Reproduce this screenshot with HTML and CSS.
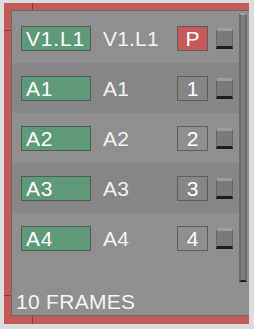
FILE: index.html
```html
<!DOCTYPE html>
<html>
<head>
<meta charset="utf-8">
<link rel="stylesheet" href="styles.css">
</head>
<body>
<div class="frame">
  <div class="panel">
    <div class="main">
      <div class="row">
        <div class="field">V1.L1</div>
        <div class="label">V1.L1</div>
        <div class="num num-p">P</div>
        <div class="btn"></div>
      </div>
      <div class="row">
        <div class="field">A1</div>
        <div class="label">A1</div>
        <div class="num">1</div>
        <div class="btn"></div>
      </div>
      <div class="row">
        <div class="field">A2</div>
        <div class="label">A2</div>
        <div class="num">2</div>
        <div class="btn"></div>
      </div>
      <div class="row">
        <div class="field">A3</div>
        <div class="label">A3</div>
        <div class="num">3</div>
        <div class="btn"></div>
      </div>
      <div class="row">
        <div class="field">A4</div>
        <div class="label">A4</div>
        <div class="num">4</div>
        <div class="btn"></div>
      </div>
      <div class="footer">10 FRAMES</div>
    </div>
    <div class="scrollbar"></div>
  </div>
</div>
</body>
</html>
```
FILE: styles.css
```css
html, body {
  margin: 0;
  padding: 0;
  background: #dcdcdc;
}
body {
  width: 254px;
  height: 329px;
  overflow: hidden;
  font-family: "Liberation Sans", Arial, sans-serif;
}
.frame {
  margin: 3px 5px 5px 4px;
  height: 321px;
  box-sizing: border-box;
  padding: 7px 0 8px 7px;
  background-color: #c45a5a;
  background-image:
    linear-gradient(#8a3c3c, #8a3c3c),
    linear-gradient(#8a3c3c, #8a3c3c),
    linear-gradient(#8a3c3c, #8a3c3c);
  background-size: 1px 100%, 100% 1px, 100% 1px;
  background-position: 28px 0, 0 27px, 0 292px;
  background-repeat: no-repeat;
}
.panel {
  height: 306px;
  box-sizing: border-box;
  border: 1px solid #6a6a6a;
  border-right: none;
  background: #8f8f8f;
  display: flex;
}
.main {
  width: 227px;
  display: flex;
  flex-direction: column;
  padding-top: 2px;
}
.row {
  height: 50px;
  display: flex;
  align-items: center;
  padding-left: 9px;
  box-sizing: border-box;
}
.row:nth-child(even) {
  background: #868686;
}
.field {
  width: 70px;
  height: 25px;
  box-sizing: border-box;
  border: 1px solid #555a57;
  background: #5e9a7a;
  color: #ffffff;
  font-size: 21px;
  line-height: 23px;
  letter-spacing: 0.8px;
  padding-left: 4px;
}
.label {
  width: 74px;
  margin-left: 12px;
  color: #f2f2f2;
  font-size: 21px;
  line-height: 23px;
  letter-spacing: 0.2px;
}
.num {
  width: 31px;
  height: 25px;
  box-sizing: border-box;
  border: 1px solid #5e5e5e;
  color: #ffffff;
  font-size: 21px;
  line-height: 23px;
  text-align: center;
}
.num-p {
  background: #c45a5a;
}
.btn {
  width: 17px;
  height: 21px;
  margin-left: 8px;
  box-sizing: border-box;
  border: 1px solid #656565;
  border-top: 3px solid #9c9c9c;
  border-bottom: 3px solid #1c1c1c;
  background: #7a7a7a;
}
.footer {
  margin-top: auto;
  padding: 0 0 3px 4px;
  color: #f4f4f4;
  font-size: 21px;
  line-height: 21px;
  letter-spacing: 0.3px;
}
.scrollbar {
  width: 8px;
  height: 269px;
  margin-top: 2px;
  box-sizing: border-box;
  border-left: 2px solid #6c6c6c;
  border-right: 2px solid #6c6c6c;
  border-top: 2px solid #a4a4a4;
  border-bottom: 2px solid #1e1e1e;
  background: #7e7e7e;
}
```
